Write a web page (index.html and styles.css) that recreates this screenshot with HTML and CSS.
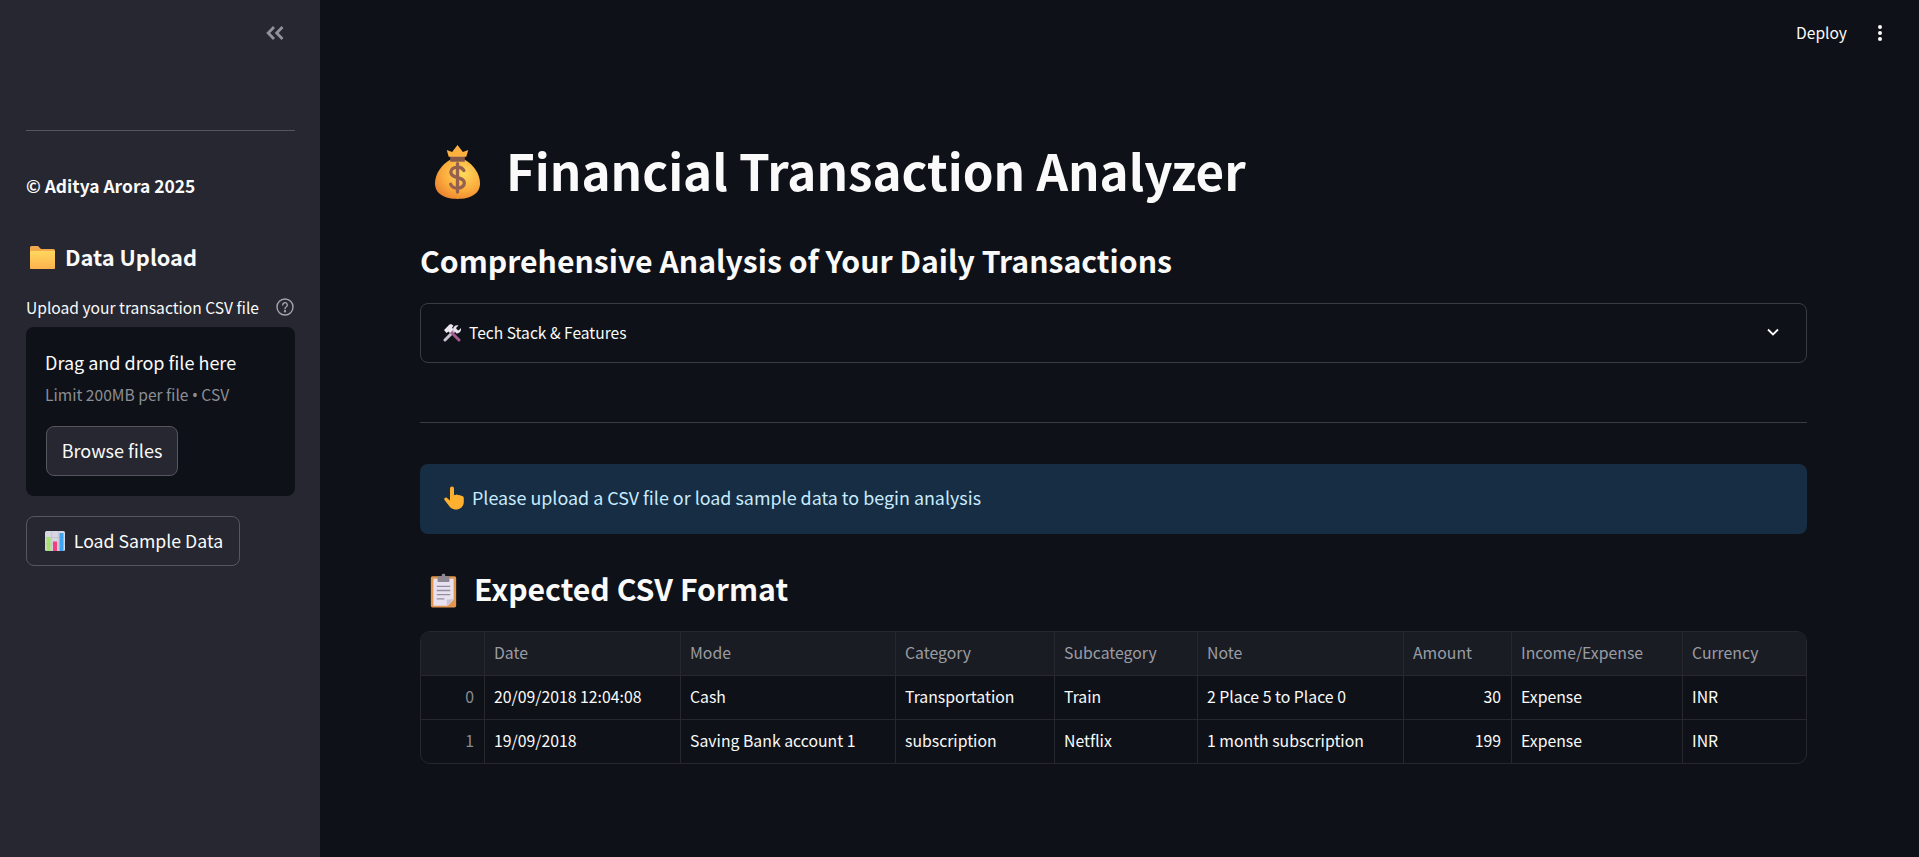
FILE: index.html
```html
<!DOCTYPE html>
<html lang="en">
<head>
<meta charset="utf-8">
<title>Financial Transaction Analyzer</title>
<link rel="stylesheet" href="styles.css">
</head>
<body>
<div class="app">
  <aside class="sidebar">
    <div class="side-top">
      <svg class="collapse" viewBox="0 0 18 14" fill="none" stroke="#92939a" stroke-width="2.800"><path d="M8 1 2.200 7 8 13M16.500 1l-5.800 6 5.800 6"/></svg>
    </div>
    <hr class="side-rule">
    <p class="copyright">© Aditya Arora 2025</p>
    <h3 class="side-heading">
      <svg class="ic-folder" viewBox="0 0 25 23"><defs><linearGradient id="fold" x1="0" y1="0" x2="0" y2="1"><stop offset="0" stop-color="#ffd75e"/><stop offset="1" stop-color="#fdb24e"/></linearGradient></defs><path d="M0 1.500A1.500 1.500 0 0 1 1.500 0H8l3 3h12.500A1.500 1.500 0 0 1 25 4.500V21.500A1.500 1.500 0 0 1 23.500 23h-22A1.500 1.500 0 0 1 0 21.500z" fill="#f2a94c"/><path d="M0 5h25v16.500a1.500 1.500 0 0 1-1.500 1.500h-22A1.500 1.500 0 0 1 0 21.500z" fill="url(#fold)"/></svg>
      <span>Data Upload</span>
    </h3>
    <div class="upload-label">
      <span>Upload your transaction CSV file</span>
      <svg class="help" viewBox="0 0 18 18" fill="none" stroke="#a3a4a9" stroke-width="1.400"><circle cx="9" cy="9" r="8"/><path d="M6.700 7a2.300 2.300 0 1 1 3.400 2c-.8.5-1.100.9-1.100 1.800" stroke-linecap="round"/><circle cx="9" cy="13.200" r=".5" fill="#a3a4a9"/></svg>
    </div>
    <div class="dropzone">
      <div class="drop-title">Drag and drop file here</div>
      <div class="drop-limit">Limit 200MB per file <span class="bullet">•</span> CSV</div>
      <button class="btn btn-browse">Browse files</button>
    </div>
    <button class="btn btn-sample">
      <svg class="ic-chart" viewBox="0 0 20 20"><rect width="20" height="20" rx="1.500" fill="#d8d6e2"/><path d="M0 6.500h20M0 13h20M6.700 0v20M13.300 0v20" stroke="#c2c0cf" stroke-width=".8"/><rect x="1.500" y="6" width="4" height="14" fill="#a4e26a"/><rect x="8" y="10.500" width="4" height="9.500" fill="#f0407e"/><rect x="14.500" y="2" width="4" height="18" fill="#3fa4ef"/></svg>
      <span>Load Sample Data</span>
    </button>
  </aside>

  <main class="main">
    <header class="toolbar">
      <span class="deploy">Deploy</span>
      <svg class="kebab" viewBox="0 0 6 16" fill="#fafafa"><circle cx="3" cy="2" r="2"/><circle cx="3" cy="8" r="2"/><circle cx="3" cy="14" r="2"/></svg>
    </header>
    <div class="content">
      <h1 class="title">
        <svg class="ic-bag" viewBox="0 0 48 56"><defs><radialGradient id="bag" cx=".62" cy=".35" r=".75"><stop offset="0" stop-color="#ffdc5c"/><stop offset=".6" stop-color="#fbab3c"/><stop offset="1" stop-color="#e8802e"/></radialGradient></defs><path d="M16.500 15C8 20 1 29 1 39c0 11 10 16 23 16s23-5 23-16c0-10-7-19-15.500-24z" fill="url(#bag)"/><path d="M16.500 11h15v6h-15z" fill="#85584c"/><path d="M15 12 13 5l5.500 2L24 0l5.500 7L35 5l-2 7z" fill="#fbb040"/><path d="M30.500 26c-1-2-3.300-3.500-6.500-3.500-4 0-6.800 2.300-6.800 5.300 0 7 13.800 4 13.800 10.800 0 3-3 5.400-7 5.400-3.400 0-6-1.500-7-4M24 19v29" fill="none" stroke="#96604f" stroke-width="3.400" stroke-linecap="round"/></svg>
        <span class="title-text">Financial Transaction Analyzer</span>
      </h1>
      <h2 class="subtitle">Comprehensive Analysis of Your Daily Transactions</h2>
      <div class="expander">
        <span class="exp-label">
          <svg class="ic-tools" viewBox="0 0 18 18"><path d="M2 16 11.500 6.500" stroke="#c9c2d1" stroke-width="3" stroke-linecap="round"/><path d="M10 5.500C10 2.500 12.800.6 15.500 1.500L13 4l1 1.500 1.500 1L18 4c.6 3-1.500 5.500-4.500 5.500z" fill="#e6e1ea"/><path d="M8 8l8 8" stroke="#a65a8e" stroke-width="3" stroke-linecap="round"/><path d="M1 6l5.500-5.500c1.500-.6 3 0 4 1.500L9 3.500l1.500 2-3.500 3.500-1.500-1.500L3.500 9z" fill="#ece8ef"/></svg>
          <span class="exp-text">Tech Stack &amp; Features</span>
        </span>
        <svg class="chevron" viewBox="0 0 14 14" fill="none" stroke="#fafafa" stroke-width="1.800"><path d="M2 4.500 7 9.500l5-5"/></svg>
      </div>
      <hr class="rule">
      <div class="alert">
        <svg class="ic-hand" viewBox="0 0 22 24"><path d="M7 2.500a2 2 0 0 1 4 0V9h1.500c1-.8 2.200-.6 2.800.2 1-.6 2.200-.3 2.700.7 1.500-.3 2.800.7 2.800 2.300V16c0 4.500-3.500 7.500-7.800 7.500-3.200 0-5.400-1.300-7-3.800L1.500 14c-1-1.500 1-3.200 2.500-2l3 2.500z" fill="#ffb02e"/></svg>
        <span class="alert-text">Please upload a CSV file or load sample data to begin analysis</span>
      </div>
      <h2 class="section">
        <svg class="ic-clip" viewBox="0 0 32 40"><path d="M1 5a2 2 0 0 1 2-2h26a2 2 0 0 1 2 2v33a2 2 0 0 1-2 2H3a2 2 0 0 1-2-2z" fill="#e3964f"/><path d="M4 6h24v25l-7 7H4z" fill="#e7e1f0"/><path d="M28 30l-8 1v7.500z" fill="#c9c1d4"/><rect x="9" y="3" width="14" height="7" rx="1" fill="#8e8894"/><rect x="14" y="0" width="4" height="5" rx="1.500" fill="#8e8894"/><path d="M8 15h16M8 20h16M8 25h16M8 30h9" stroke="#958fa0" stroke-width="1.500"/></svg>
        <span class="section-text">Expected CSV Format</span>
      </h2>
      <div class="table">
        <div class="cell head index"></div>
        <div class="cell head">Date</div>
        <div class="cell head">Mode</div>
        <div class="cell head">Category</div>
        <div class="cell head">Subcategory</div>
        <div class="cell head">Note</div>
        <div class="cell head">Amount</div>
        <div class="cell head">Income/Expense</div>
        <div class="cell head last">Currency</div>

        <div class="cell index num">0</div>
        <div class="cell">20/09/2018 12:04:08</div>
        <div class="cell">Cash</div>
        <div class="cell">Transportation</div>
        <div class="cell">Train</div>
        <div class="cell">2 Place 5 to Place 0</div>
        <div class="cell num">30</div>
        <div class="cell">Expense</div>
        <div class="cell last">INR</div>

        <div class="cell index num bottom">1</div>
        <div class="cell bottom">19/09/2018</div>
        <div class="cell bottom">Saving Bank account 1</div>
        <div class="cell bottom">subscription</div>
        <div class="cell bottom">Netflix</div>
        <div class="cell bottom">1 month subscription</div>
        <div class="cell num bottom">199</div>
        <div class="cell bottom">Expense</div>
        <div class="cell last bottom">INR</div>
      </div>
    </div>
  </main>
</div>
</body>
</html>
```
FILE: styles.css
```css
* { box-sizing: border-box; }
html, body { margin: 0; height: 100%; overflow: hidden; }
body {
  background: #0e1117;
  color: #fafafa;
  font-family: "Noto Sans CJK SC", "Noto Sans", sans-serif;
  font-size: 15.6px;
}
.app { display: flex; height: 857px; }

/* Sidebar */
.sidebar {
  width: 320px;
  flex: none;
  background: #262730;
  padding: 0 25px 0 26px;
  display: flex;
  flex-direction: column;
  align-items: flex-start;
}
.side-top { height: 130px; width: 100%; display: flex; justify-content: flex-end; padding: 26px 11px 0 0; }
.collapse { width: 18px; height: 14px; }
.side-rule { width: 100%; margin: 0; border: 0; border-top: 1px solid #55565e; }
.copyright { margin: 44px 0 0; font-size: 17.400px; line-height: 22px; font-weight: 700; }
.side-heading { margin: 44px 0 0; padding-left: 4px; display: flex; align-items: center; gap: 10px; font-size: 21.800px; line-height: 32px; font-weight: 600; }
.ic-folder { width: 25px; height: 23px; }
.upload-label { margin-top: 22px; width: 100%; height: 24px; display: flex; justify-content: space-between; align-items: center; line-height: 22px; }
.help { width: 18px; height: 18px; margin-right: 1px; }
.dropzone { margin-top: 8px; width: 100%; height: 169px; border-radius: 8px; background: #0e1117; padding: 20px; }
.drop-title { font-size: 18px; line-height: 30px; margin-left: -1px; }
.drop-limit { margin: 7px 0 0 -1px; line-height: 20px; color: #8c8e94; }
.bullet { font-family: "Noto Sans", sans-serif; }
.btn {
  display: flex; align-items: center; justify-content: center;
  font: inherit; color: #fafafa;
  background: #262730;
  border: 1px solid #55565e;
  border-radius: 8px;
  height: 50px;
}
.btn-browse { margin-top: 21px; width: 132px; font-size: 18px; padding: 0 0 2px; }
.btn-sample { margin-top: 20px; width: 214px; font-size: 17.700px; gap: 9px; padding: 0 0 0 2px; }
.btn-sample span { padding-bottom: 2px; }
.ic-chart { width: 20px; height: 20px; }

/* Main */
.main { flex: 1; min-width: 0; display: flex; flex-direction: column; }
.toolbar { height: 66px; flex: none; display: flex; justify-content: flex-end; align-items: center; padding: 0 36px 0 0; gap: 30px; }
.deploy { line-height: 22px; padding-bottom: 2px; }
.kebab { width: 6px; height: 16px; }
.content { padding: 0 112px 0 100px; }
.title { margin: 71px 0 0; height: 70px; display: flex; align-items: center; gap: 25px; padding-left: 14px; font-size: 49.300px; line-height: 70px; font-weight: 700; }
.title-text { padding-bottom: 4px; }
.ic-bag { width: 47px; height: 55px; }
.subtitle { margin: 32px 0 0; font-size: 30.200px; line-height: 42px; font-weight: 600; }
.expander { margin-top: 22px; height: 60px; border: 1px solid #3a3c44; border-radius: 8px; display: flex; align-items: center; justify-content: space-between; padding: 0 26px 0 22px; }
.exp-label { display: flex; align-items: center; gap: 8px; }
.exp-text { padding-bottom: 2px; }
.ic-tools { width: 18px; height: 18px; }
.chevron { width: 14px; height: 14px; margin-top: -2px; }
.rule { margin: 59px 0 0; border: 0; border-top: 1px solid #3a3c44; }
.alert { margin-top: 41px; height: 70px; border-radius: 8px; background: #172d43; color: #c7ebff; display: flex; align-items: center; gap: 7px; padding: 0 22px 0 23px; font-size: 17.900px; }
.alert-text { padding-bottom: 5px; }
.ic-hand { width: 22px; height: 24px; margin-top: -2px; }
.section { margin: 36px 0 0; height: 40px; display: flex; align-items: center; gap: 17px; padding-left: 10px; font-size: 30.200px; line-height: 40px; font-weight: 600; }
.section-text { padding-bottom: 5px; }
.ic-clip { width: 27px; height: 35px; }
.table {
  margin-top: 21px;
  height: 133px;
  border: 1px solid #26282e;
  border-radius: 10px;
  overflow: hidden;
  display: grid;
  grid-template-columns: 64px 196px 215px 159px 143px 206px 108px 171px 1fr;
  grid-template-rows: 44px 44px 43px;
  font-size: 15.800px;
}
.cell { display: flex; align-items: center; padding: 0 8px 3px 9px; white-space: nowrap; border-right: 1px solid #26282e; border-bottom: 1px solid #26282e; }
.head { background: #1a1c24; color: #9a9ca3; }
.index { color: #8a8c93; background: #1a1c24; }
.index:not(.head) { background: transparent; }
.num { justify-content: flex-end; padding-right: 10px; }
.last { border-right: 0; }
.bottom { border-bottom: 0; }
```
